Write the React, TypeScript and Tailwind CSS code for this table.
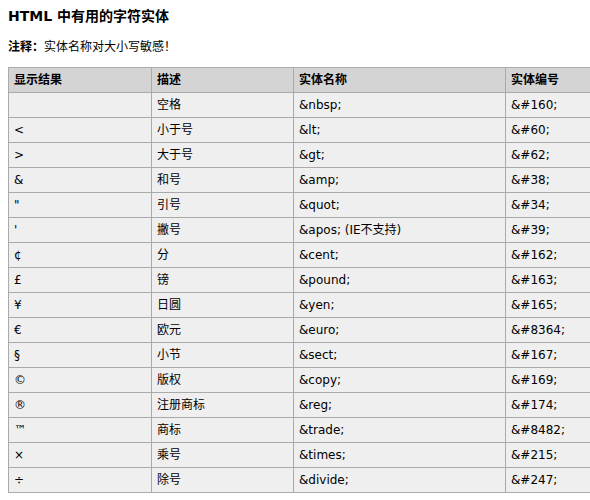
const rows: [string, string, string, string][] = [
  ["\u00a0", "空格", "&nbsp;", "&#160;"],
  ["<", "小于号", "&lt;", "&#60;"],
  [">", "大于号", "&gt;", "&#62;"],
  ["&", "和号", "&amp;", "&#38;"],
  ['"', "引号", "&quot;", "&#34;"],
  ["'", "撇号", "&apos; (IE不支持)", "&#39;"],
  ["¢", "分", "&cent;", "&#162;"],
  ["£", "镑", "&pound;", "&#163;"],
  ["¥", "日圆", "&yen;", "&#165;"],
  ["€", "欧元", "&euro;", "&#8364;"],
  ["§", "小节", "&sect;", "&#167;"],
  ["©", "版权", "&copy;", "&#169;"],
  ["®", "注册商标", "&reg;", "&#174;"],
  ["™", "商标", "&trade;", "&#8482;"],
  ["×", "乘号", "&times;", "&#215;"],
  ["÷", "除号", "&divide;", "&#247;"],
];

const cell = "border border-[#aaaaaa] px-[5px] py-[5px] text-left align-middle whitespace-nowrap";

export default function App() {
  return (
    <div className="w-[590px] h-[500px] overflow-hidden bg-white text-black font-['DejaVu_Sans','Noto_Sans_CJK_SC',sans-serif] text-[12px] leading-[14px]">
      <div className="px-2 pt-[6px]">
        <h2 className="text-[14px] leading-[20px] font-bold">HTML 中有用的字符实体</h2>
        <p className="mt-[14px]">
          <b>注释：</b>实体名称对大小写敏感！
        </p>
        <table className="mt-[13px] border-collapse w-[650px] table-fixed">
          <colgroup>
            <col className="w-[143px]" />
            <col className="w-[142px]" />
            <col className="w-[212px]" />
            <col />
          </colgroup>
          <thead>
            <tr className="bg-[#d4d4d4]">
              <th className={cell + " font-bold"}>显示结果</th>
              <th className={cell + " font-bold"}>描述</th>
              <th className={cell + " font-bold"}>实体名称</th>
              <th className={cell + " font-bold"}>实体编号</th>
            </tr>
          </thead>
          <tbody>
            {rows.map((r, i) => (
              <tr key={i} className="bg-[#efefef]">
                <td className={cell}>{r[0]}</td>
                <td className={cell}>{r[1]}</td>
                <td className={cell}>{r[2]}</td>
                <td className={cell}>{r[3]}</td>
              </tr>
            ))}
          </tbody>
        </table>
      </div>
    </div>
  );
}
